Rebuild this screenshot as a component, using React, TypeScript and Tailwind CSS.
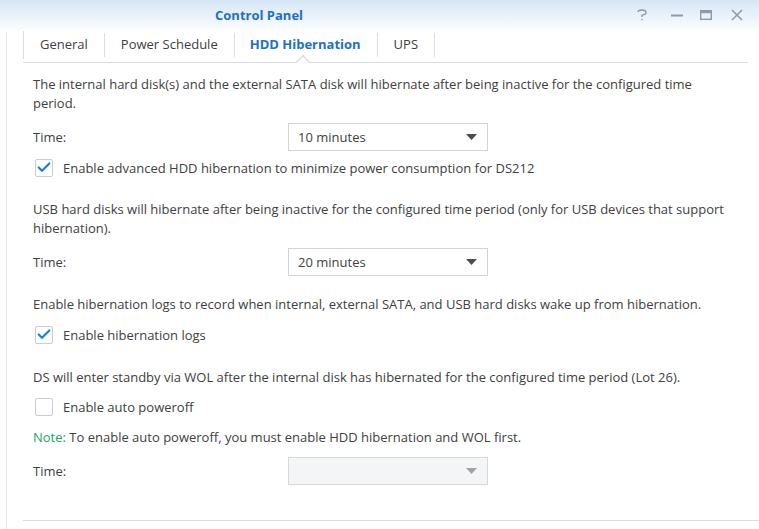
import { Check } from 'lucide-react';

const font = { fontFamily: '"Open Sans", "Noto Sans", sans-serif' };

function Select({ value, disabled }: { value?: string; disabled?: boolean }) {
  return (
    <div
      className={`w-[200px] h-[28px] border flex items-center justify-between pl-[9px] pr-[9px] ${
        disabled ? 'bg-[#f4f5f6] border-[#d4d8dc]' : 'bg-white border-[#d0d4d8]'
      }`}
    >
      <span className="text-[13px] text-[#404040]">{value}</span>
      <svg width="11" height="6" viewBox="0 0 11 6" className="mr-[1px]">
        <path d="M0 0 L11 0 L5.5 6 Z" fill={disabled ? '#a0a4a8' : '#4a4e52'} />
      </svg>
    </div>
  );
}

function CheckRow({ label, checked, className }: { label: string; checked?: boolean; className: string }) {
  return (
    <div className={`flex items-center h-[18px] pl-[2px] ${className}`}>
      <div className="w-[18px] h-[18px] border border-[#c8cdd2] rounded-[2px] bg-white flex items-center justify-center">
        {checked && <Check size={17} strokeWidth={3.2} className="text-[#1a7fd8] -mt-[1px]" />}
      </div>
      <span className="ml-[10px] text-[13px] text-[#404040]">{label}</span>
    </div>
  );
}

function TimeRow({ value, disabled, className }: { value?: string; disabled?: boolean; className: string }) {
  return (
    <div className={`flex items-center ${className}`}>
      <span className="w-[255px] text-[13px] text-[#404040]">Time:</span>
      <Select value={value} disabled={disabled} />
    </div>
  );
}

export default function App() {
  const tabs = ['General', 'Power Schedule', 'HDD Hibernation', 'UPS'];

  return (
    <div className="w-[759px] h-[529px] bg-white overflow-hidden flex flex-col" style={font}>
      {/* title bar */}
      <div className="h-[30px] shrink-0 bg-gradient-to-b from-[#d6e6f6] to-[#fbfdff] flex items-center relative">
        <span className="pl-[215px] pt-[1px] text-[13px] font-bold text-[#1c70c6]">Control Panel</span>
        <div className="ml-auto flex items-center gap-[19px] pr-[16px] text-[#8c9aaa]">
          <svg width="12" height="12" viewBox="0 0 12 12" fill="none" stroke="currentColor" strokeWidth="1.4">
            <path d="M2 3 Q2 1 6 1 Q10 1 10 3.5 Q10 5.5 6 6.2 L6 8" />
            <circle cx="6" cy="10.6" r="0.8" fill="currentColor" stroke="none" />
          </svg>
          <svg width="12" height="12" viewBox="0 0 12 12" className="ml-[4px]">
            <rect x="0" y="5.5" width="12" height="2" fill="currentColor" />
          </svg>
          <svg width="12" height="12" viewBox="0 0 12 12" className="-ml-[2px]">
            <rect x="0.7" y="1.7" width="10.6" height="8.6" fill="none" stroke="currentColor" strokeWidth="1.4" />
            <rect x="0.7" y="1.7" width="10.6" height="2.5" fill="currentColor" />
          </svg>
          <svg width="12" height="12" viewBox="0 0 12 12" fill="none" stroke="currentColor" strokeWidth="1.5">
            <path d="M1 1 L11 11 M11 1 L1 11" />
          </svg>
        </div>
      </div>

      <div className="flex flex-1">
        <div className="w-[6px] shrink-0" />
        <div className="w-px shrink-0 bg-[#e2e5e8] mt-[2px]" />
        <div className="w-[16px] shrink-0" />
        <div className="flex-1 flex flex-col">
          {/* tabs */}
          <div className="h-[33px] mr-[11px] border-b border-[#d8dcdf] flex items-stretch relative">
            {tabs.map((t, i) => (
              <div key={t} className={`flex items-center h-[28px] mt-[1px] ${i === 0 ? 'border-l border-[#dcdfe2]' : ''}`}>
                <span
                  className={`px-[16px] text-[13px] ${
                    i === 2 ? 'font-bold text-[#1c70c6] pl-[15px] pr-[16px]' : 'text-[#404040]'
                  }`}
                >
                  {t}
                </span>
                <div className="w-px h-[24px] bg-[#dcdfe2]" />
              </div>
            ))}
            {/* active tab notch */}
            <div className="absolute left-[275px] bottom-[-5px] w-[10px] h-[10px] bg-white border-l border-t border-[#cfd3d7] rotate-45" />
          </div>

          <div className="pl-[10px] pr-[26px] text-[13px] text-[#404040] leading-[19px]">
            <p className="mt-[12px]">
              The internal hard disk(s) and the external SATA disk will hibernate after being inactive for the configured time period.
            </p>
            <TimeRow value="10 minutes" className="mt-[10px]" />
            <CheckRow checked label="Enable advanced HDD hibernation to minimize power consumption for DS212" className="mt-[8px]" />

            <p className="mt-[23px]">
              USB hard disks will hibernate after being inactive for the configured time period (only for USB devices that support hibernation).
            </p>
            <TimeRow value="20 minutes" className="mt-[10px]" />

            <p className="mt-[19px]">
              Enable hibernation logs to record when internal, external SATA, and USB hard disks wake up from hibernation.
            </p>
            <CheckRow checked label="Enable hibernation logs" className="mt-[12px]" />

            <p className="mt-[24px]">
              DS will enter standby via WOL after the internal disk has hibernated for the configured time period (Lot 26).
            </p>
            <CheckRow label="Enable auto poweroff" className="mt-[11px]" />
            <p className="mt-[12px]">
              <span className="text-[#1aa36a]">Note:</span> To enable auto poweroff, you must enable HDD hibernation and WOL first.
            </p>
            <TimeRow disabled className="mt-[10px]" />
          </div>
          <div className="mt-[35px] border-t border-[#dcdfe2]" />
        </div>
      </div>
    </div>
  );
}
